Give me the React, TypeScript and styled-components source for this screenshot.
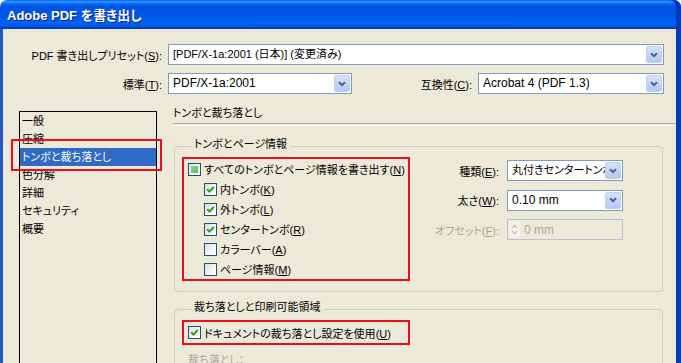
import React from 'react'
import styled, { createGlobalStyle } from 'styled-components'

const GlobalStyle = createGlobalStyle`
    html, body {
        margin: 0;
        padding: 0;
        background: #ffffff;
    }
`

const Window = styled.div`
    width: 681px;
    height: 363px;
    overflow: hidden;
    display: flex;
    flex-direction: column;
    font-family: 'Liberation Sans', 'Noto Sans CJK JP', sans-serif;
    font-size: 11px;
    font-feature-settings: 'palt';
    color: #000;
`

const TitleBar = styled.div`
    flex: none;
    height: 29px;
    display: flex;
    align-items: center;
    padding-left: 7px;
    border-radius: 7px 7px 0 0;
    background: linear-gradient(
        to bottom,
        #0058ee 0%,
        #3593ff 5%,
        #1a82ff 9%,
        #0366f6 14%,
        #0057e5 22%,
        #0054e3 40%,
        #0058eb 60%,
        #0263f7 78%,
        #0058e8 90%,
        #0044b8 96%,
        #00359e 100%
    );
    box-shadow: inset -5px 0 0 #0a37b4;
`

const Title = styled.span`
    color: #fff;
    font-weight: bold;
    font-size: 13px;
    text-shadow: 1px 1px 0 #0b2382;
`

const Frame = styled.div`
    flex: 1;
    min-height: 0;
    display: flex;
    flex-direction: column;
    background: #ece9d8;
    border-left: 3px solid #2358d0;
    border-right: 5px solid #0a37b4;
    padding: 15px 12px 0 0;
`

const FieldRow = styled.div`
    display: flex;
    align-items: center;
    height: 21px;

    & + & {
        margin-top: 8px;
    }
`

const FieldLabel = styled.span<{ $width?: number; $disabled?: boolean }>`
    flex: none;
    ${(p) => (p.$width ? `width: ${p.$width}px; padding-right: 6px;` : 'justify-self: end; padding-right: 8px;')}
    box-sizing: border-box;
    text-align: right;
    white-space: nowrap;
    color: ${(p) => (p.$disabled ? '#aca899' : '#000')};
`

const SelectBox = styled.div<{ $width?: number }>`
    display: flex;
    align-items: stretch;
    height: 21px;
    box-sizing: border-box;
    padding: 1px;
    border: 1px solid #7f9db9;
    background: #fff;
    ${(p) => (p.$width ? `width: ${p.$width}px; flex: none;` : 'flex: 1; min-width: 0;')}
`

const SelectText = styled.span<{ $latin?: boolean }>`
    flex: 1;
    min-width: 0;
    padding-left: 3px;
    line-height: 17px;
    font-size: ${(p) => (p.$latin ? 12 : 11)}px;
    white-space: nowrap;
    overflow: hidden;
`

const ArrowButton = styled.span`
    flex: none;
    width: 16px;
    box-sizing: border-box;
    display: flex;
    align-items: center;
    justify-content: center;
    border: 1px solid #bcd0f6;
    border-radius: 2px;
    background: linear-gradient(to bottom, #d6e2fd, #b3c7f5);
`

const SpinBox = styled.div`
    display: flex;
    align-items: center;
    height: 21px;
    box-sizing: border-box;
    padding: 1px;
    border: 1px solid #b5c2d2;
    color: #aca899;
    font-size: 12px;
`

const SpinButtons = styled.span`
    flex: none;
    width: 11px;
    height: 17px;
    display: flex;
    align-items: center;
    justify-content: center;
    border-radius: 3px;
    background: #f2f1ea;
`

const SpinText = styled.span`
    padding-left: 4px;
`

const Main = styled.div`
    flex: 1;
    min-height: 0;
    display: flex;
    align-items: flex-start;
    margin-top: 11px;
    padding-left: 16px;
`

const SideList = styled.ul`
    position: relative;
    flex: none;
    width: 138px;
    height: 260px;
    box-sizing: border-box;
    margin: 6px 0 0;
    padding: 0;
    list-style: none;
    border: 1px solid #000;
`

const SideItem = styled.li<{ $selected?: boolean }>`
    height: 18px;
    line-height: 18px;
    padding-left: 2px;
    white-space: nowrap;
    background: ${(p) => (p.$selected ? '#316ac5' : 'transparent')};
    color: ${(p) => (p.$selected ? '#fff' : '#000')};
`

const Highlight = styled.div`
    position: absolute;
    left: -9px;
    top: 27px;
    width: 151px;
    height: 32px;
    box-sizing: border-box;
    border: 2px solid #e8101c;
    pointer-events: none;
`

const Panel = styled.div`
    flex: 1;
    min-width: 0;
    margin-left: 15px;
    display: flex;
    flex-direction: column;
`

const PanelHeading = styled.div`
    height: 16px;
    line-height: 16px;
    padding-left: 1px;
`

const Separator = styled.div`
    margin: 2px -12px 0 0;
    height: 1px;
    border-top: 1px solid #aca899;
    border-bottom: 1px solid #fff;
`

const Group = styled.fieldset<{ $gap: number }>`
    margin: ${(p) => p.$gap}px 1px 0 2px;
    padding: 0 0 10px 7px;
    min-width: 0;
    border: 1px solid #d0d0bf;
    border-radius: 4px;
`

const Legend = styled.legend`
    margin-left: 9px;
    padding: 0 3px 5px;
    line-height: 14px;
`

const GroupBody = styled.div`
    display: flex;
    align-items: flex-start;
    padding-top: 1px;
`

const Marked = styled.div`
    flex: none;
    width: 228px;
    box-sizing: border-box;
    padding: 0 4px;
    border: 2px solid #e8101c;
`

const CheckRow = styled.label<{ $indent?: number; $height?: number }>`
    display: flex;
    align-items: center;
    gap: 3px;
    height: ${(p) => p.$height ?? 20}px;
    padding-left: ${(p) => p.$indent ?? 0}px;
    white-space: nowrap;
`

const Box = styled.span`
    flex: none;
    width: 13px;
    height: 13px;
    box-sizing: border-box;
    display: flex;
    align-items: center;
    justify-content: center;
    border: 1px solid #1c5180;
    background: linear-gradient(135deg, #dcdcd7, #fbfbf9 70%, #ffffff);
`

const Mixed = styled.span`
    width: 7px;
    height: 7px;
    background: linear-gradient(135deg, #8fd48f, #5cb85c);
`

const Options = styled.div`
    margin: 3px 39px 0 auto;
    display: grid;
    grid-template-columns: auto 116px;
    row-gap: 8.5px;
    align-items: center;
`

const Muted = styled.div`
    margin-top: 6px;
    padding-left: 6px;
    color: #aca899;
    white-space: nowrap;
`

const Chevron = () => (
    <svg width='8' height='6' viewBox='0 0 8 6'>
        <path d='M1 1.2 L4 4.2 L7 1.2' fill='none' stroke='#4d6185' strokeWidth='2' />
    </svg>
)

const Select = ({ value, width, latin }: { value: string; width?: number; latin?: boolean }) => (
    <SelectBox $width={width}>
        <SelectText $latin={latin}>{value}</SelectText>
        <ArrowButton>
            <Chevron />
        </ArrowButton>
    </SelectBox>
)

const Checkbox = ({ state }: { state: 'on' | 'off' | 'mixed' }) => (
    <Box>
        {state === 'on' && (
            <svg width='9' height='9' viewBox='0 0 9 9'>
                <path d='M1.2 4.2 L3.5 6.6 L7.8 2' fill='none' stroke='#21a121' strokeWidth='2' />
            </svg>
        )}
        {state === 'mixed' && <Mixed />}
    </Box>
)

const Key = ({ k }: { k: string }) => (
    <>
        (<u>{k}</u>)
    </>
)

const markItems: { label: string; k: string; state: 'on' | 'off' }[] = [
    { label: '内トンボ', k: 'K', state: 'on' },
    { label: '外トンボ', k: 'L', state: 'on' },
    { label: 'センタートンボ', k: 'R', state: 'on' },
    { label: 'カラーバー', k: 'A', state: 'off' },
    { label: 'ページ情報', k: 'M', state: 'off' },
]

const sections = ['一般', '圧縮', 'トンボと裁ち落とし', '色分解', '詳細', 'セキュリティ', '概要']

export default function App() {
    return (
        <>
            <GlobalStyle />
            <Window>
                <TitleBar>
                    <Title>Adobe PDF を書き出し</Title>
                </TitleBar>
                <Frame>
                    <FieldRow>
                        <FieldLabel $width={165}>
                            PDF 書き出しプリセット<Key k='S' />:
                        </FieldLabel>
                        <Select value='[PDF/X-1a:2001 (日本)] (変更済み)' />
                    </FieldRow>
                    <FieldRow>
                        <FieldLabel $width={165}>
                            標準<Key k='T' />:
                        </FieldLabel>
                        <Select value='PDF/X-1a:2001' width={184} latin />
                        <FieldLabel $width={126}>
                            互換性<Key k='C' />:
                        </FieldLabel>
                        <Select value='Acrobat 4 (PDF 1.3)' latin />
                    </FieldRow>

                    <Main>
                        <SideList>
                            {sections.map((s, i) => (
                                <SideItem key={s} $selected={i === 2}>
                                    {s}
                                </SideItem>
                            ))}
                            <Highlight />
                        </SideList>

                        <Panel>
                            <PanelHeading>トンボと裁ち落とし</PanelHeading>
                            <Separator />

                            <Group $gap={11}>
                                <Legend>トンボとページ情報</Legend>
                                <GroupBody>
                                    <Marked>
                                        <CheckRow>
                                            <Checkbox state='mixed' />
                                            <span>
                                                すべてのトンボとページ情報を書き出す<Key k='N' />
                                            </span>
                                        </CheckRow>
                                        {markItems.map((m) => (
                                            <CheckRow key={m.k} $indent={16}>
                                                <Checkbox state={m.state} />
                                                <span>
                                                    {m.label}
                                                    <Key k={m.k} />
                                                </span>
                                            </CheckRow>
                                        ))}
                                    </Marked>

                                    <Options>
                                        <FieldLabel>
                                            種類<Key k='E' />:
                                        </FieldLabel>
                                        <Select value='丸付きセンタートンボ' />
                                        <FieldLabel>
                                            太さ<Key k='W' />:
                                        </FieldLabel>
                                        <Select value='0.10 mm' latin />
                                        <FieldLabel $disabled>
                                            オフセット<Key k='F' />:
                                        </FieldLabel>
                                        <SpinBox>
                                            <SpinButtons>
                                                <svg width='7' height='13' viewBox='0 0 7 13'>
                                                    <path d='M1 5 L3.5 2.5 L6 5 M1 8 L3.5 10.5 L6 8' fill='none' stroke='#c9c6b6' strokeWidth='1.3' />
                                                </svg>
                                            </SpinButtons>
                                            <SpinText>0 mm</SpinText>
                                        </SpinBox>
                                    </Options>
                                </GroupBody>
                            </Group>

                            <Group $gap={8}>
                                <Legend>裁ち落としと印刷可能領域</Legend>
                                <GroupBody>
                                    <Marked>
                                        <CheckRow $height={21}>
                                            <Checkbox state='on' />
                                            <span>
                                                ドキュメントの裁ち落とし設定を使用<Key k='U' />
                                            </span>
                                        </CheckRow>
                                    </Marked>
                                </GroupBody>
                                <Muted>裁ち落とし：</Muted>
                            </Group>
                        </Panel>
                    </Main>
                </Frame>
            </Window>
        </>
    )
}
